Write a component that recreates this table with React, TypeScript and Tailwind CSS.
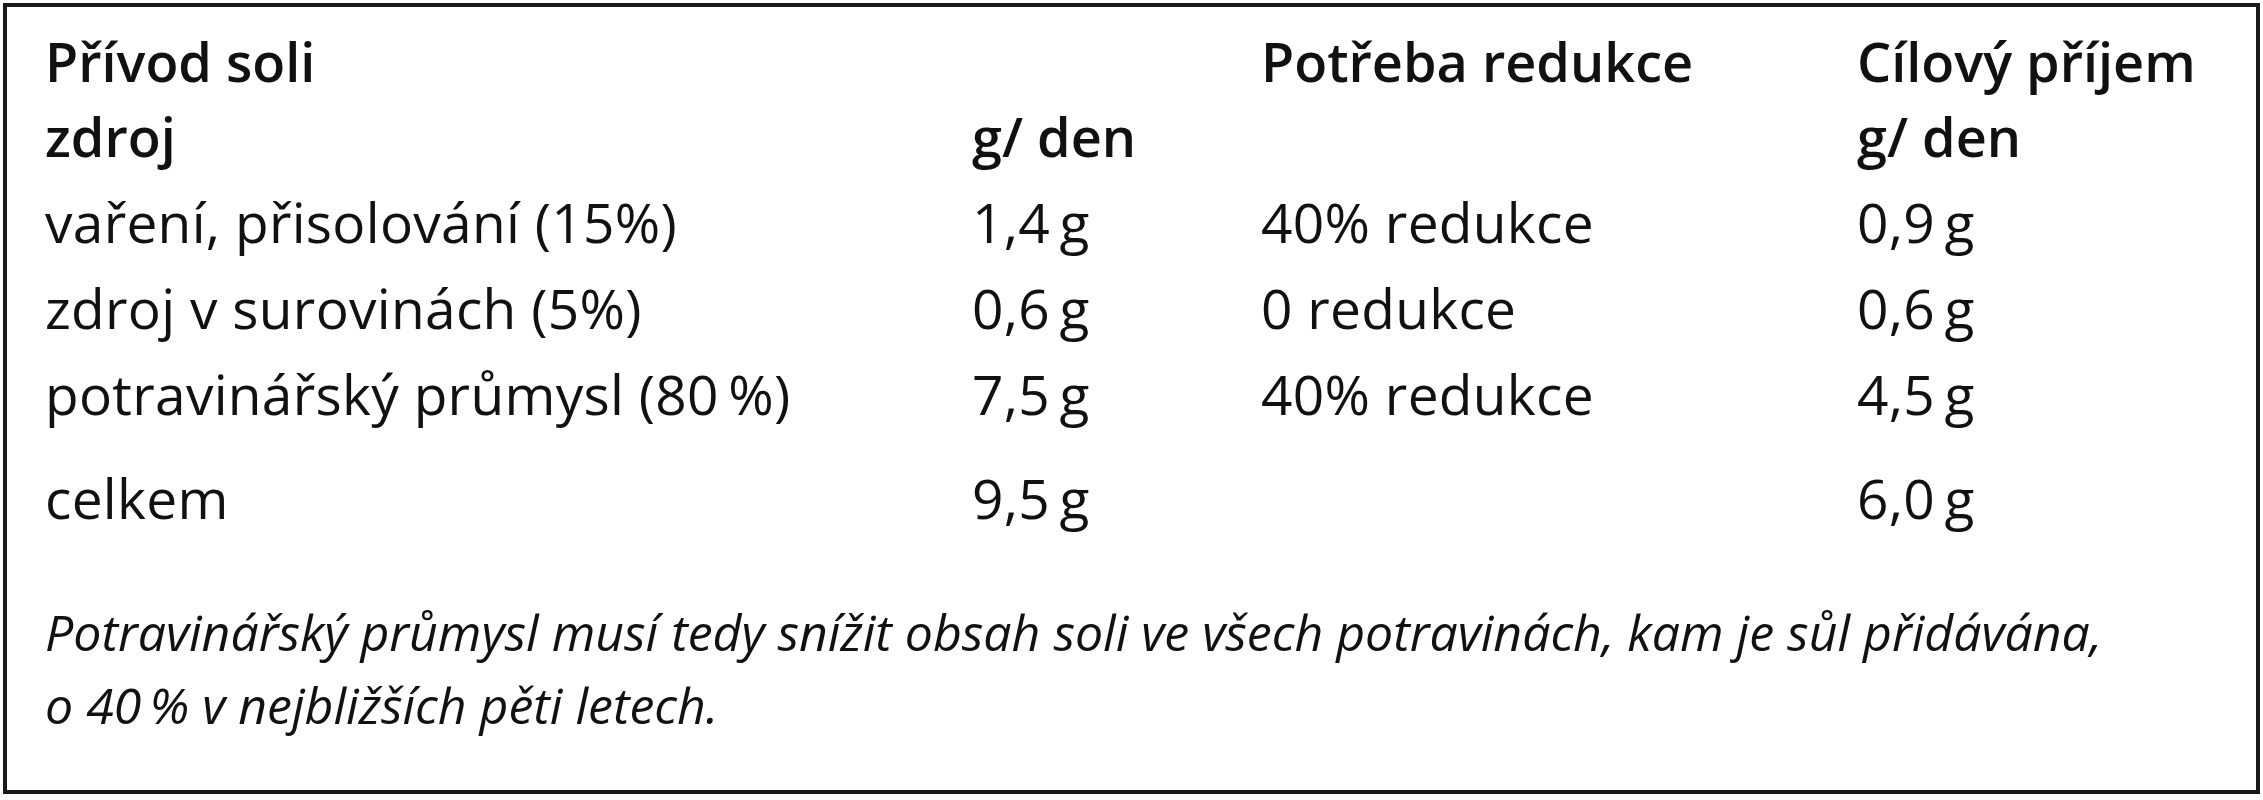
const rows = [
  { src: "vaření, přisolování (15%)", g: "1,4\u2009g", red: "40% redukce", target: "0,9\u2009g" },
  { src: "zdroj v surovinách (5%)", g: "0,6\u2009g", red: "0 redukce", target: "0,6\u2009g" },
  { src: "potravinářský průmysl (80\u2009%)", g: "7,5\u2009g", red: "40% redukce", target: "4,5\u2009g" },
];

const cols = "grid grid-cols-[927px_289px_596px_1fr]";

export default function App() {
  return (
    <div
      className="bg-white text-[#111] min-h-[800px] p-[3px]"
      style={{ fontFamily: '"Open Sans", "Noto Sans", sans-serif' }}
    >
      <div className="h-[791px] border-[4px] border-[#1a1a1a] pl-[38px] pt-[17px]">
        <div className={`${cols} font-semibold text-[54px] leading-[75px]`}>
          <div>Přívod soli</div>
          <div></div>
          <div>Potřeba redukce</div>
          <div>Cílový příjem</div>
        </div>
        <div className={`${cols} font-semibold text-[54px] leading-[75px]`}>
          <div>zdroj</div>
          <div>g/ den</div>
          <div></div>
          <div>g/ den</div>
        </div>
        <div className="mt-[5px]">
          {rows.map((r) => (
            <div key={r.src} className={`${cols} text-[55px] leading-[86px] tracking-[0.3px]`}>
              <div>{r.src}</div>
              <div>{r.g}</div>
              <div>{r.red}</div>
              <div>{r.target}</div>
            </div>
          ))}
        </div>
        <div className={`${cols} text-[55px] leading-[86px] tracking-[0.3px] mt-[18px]`}>
          <div>celkem</div>
          <div>9,5&#8201;g</div>
          <div></div>
          <div>6,0&#8201;g</div>
        </div>
        <p className="italic text-[50px] leading-[73px] mt-[55px]">
          Potravinářský průmysl musí tedy snížit obsah soli ve všech potravinách, kam je sůl přidávána,
          <br />o 40&#8201;% v nejbližších pěti letech.
        </p>
      </div>
    </div>
  );
}
